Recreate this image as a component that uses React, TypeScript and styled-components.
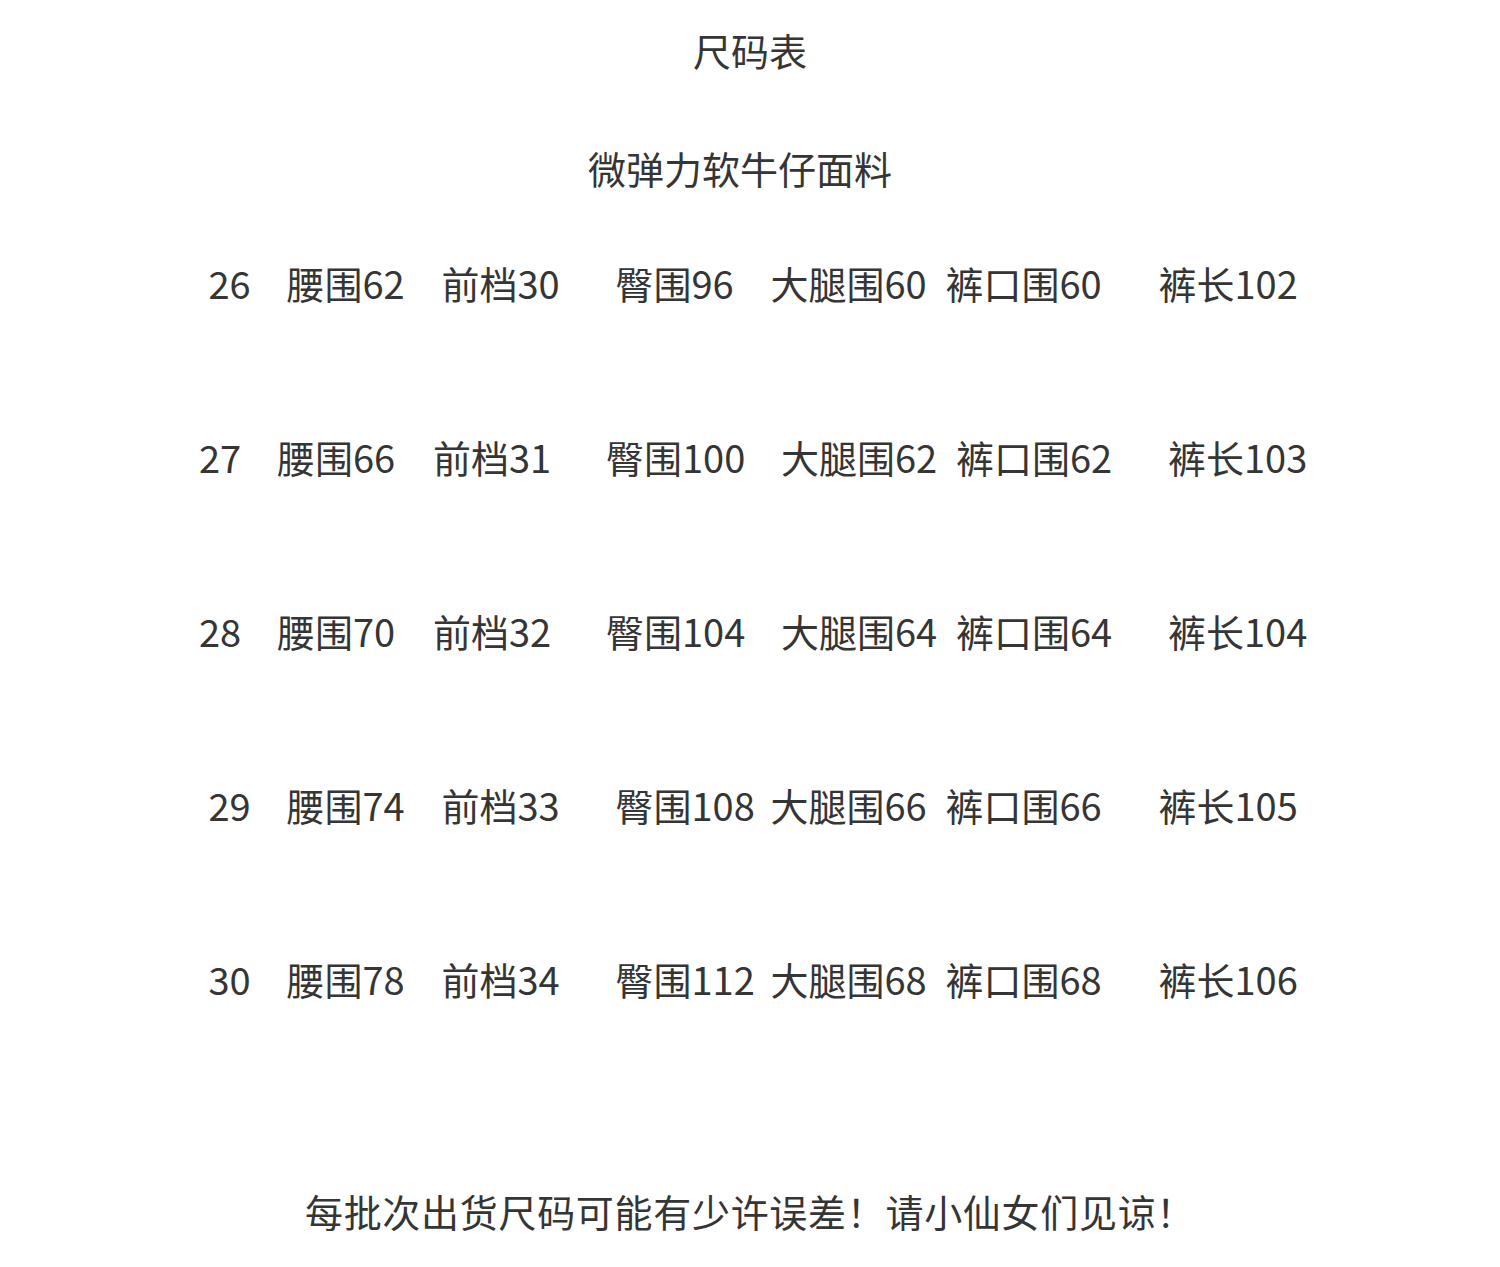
import React from "react";
import styled, { createGlobalStyle } from "styled-components";

const GlobalStyle = createGlobalStyle`
  html, body {
    margin: 0;
    padding: 0;
    background: #ffffff;
  }
  body {
    font-family: "Noto Sans CJK SC", "Noto Sans", sans-serif;
    color: #353535;
  }
`;

const Page = styled.div`
  width: 1500px;
  height: 1267px;
  box-sizing: border-box;
  padding-top: 25px;
  display: flex;
  flex-direction: column;
  align-items: center;
  overflow: hidden;
`;

const Line = styled.div<{ $top: number; $shift?: number; $spacing?: number }>`
  height: 50px;
  line-height: 50px;
  margin-top: ${(p) => p.$top}px;
  padding-right: ${(p) => p.$shift || 0}px;
  letter-spacing: ${(p) => p.$spacing || 0}px;
  font-size: 38px;
  white-space: nowrap;
  text-align: center;
`;

const Row = styled.div<{ $top: number }>`
  height: 50px;
  line-height: 50px;
  margin-top: ${(p) => p.$top}px;
  font-size: 38px;
  display: flex;
  justify-content: center;
  white-space: nowrap;
`;

const Cell = styled.span<{ $w: number }>`
  display: block;
  width: ${(p) => p.$w}px;
  flex-shrink: 0;
`;

// column widths measured from the two alignments used in the sheet
const layoutA = [78, 155, 174, 155, 175, 213, 133];
const layoutB = [78, 156, 173, 175, 175, 212, 133];

type SizeRow = { size: string; cells: string[]; widths: number[] };

const rows: SizeRow[] = [
  { size: "26", cells: ["腰围62", "前档30", "臀围96", "大腿围60", "裤口围60", "裤长102"], widths: layoutA },
  { size: "27", cells: ["腰围66", "前档31", "臀围100", "大腿围62", "裤口围62", "裤长103"], widths: layoutB },
  { size: "28", cells: ["腰围70", "前档32", "臀围104", "大腿围64", "裤口围64", "裤长104"], widths: layoutB },
  { size: "29", cells: ["腰围74", "前档33", "臀围108", "大腿围66", "裤口围66", "裤长105"], widths: layoutA },
  { size: "30", cells: ["腰围78", "前档34", "臀围112", "大腿围68", "裤口围68", "裤长106"], widths: layoutA },
];

export default function App() {
  return (
    <>
      <GlobalStyle />
      <Page>
        <Line $top={0}>尺码表</Line>
        <Line $top={68} $shift={20}>微弹力软牛仔面料</Line>
        {rows.map((r, i) => {
          const all = [r.size, ...r.cells];
          return (
            <Row key={r.size} $top={i === 0 ? 65 : 124}>
              {all.map((t, j) => (
                <Cell key={j} $w={r.widths[j]}>
                  {t}
                </Cell>
              ))}
            </Row>
          );
        })}
        <Line $top={182} $spacing={0.7}>
          每批次出货尺码可能有少许误差！请小仙女们见谅！
        </Line>
      </Page>
    </>
  );
}
